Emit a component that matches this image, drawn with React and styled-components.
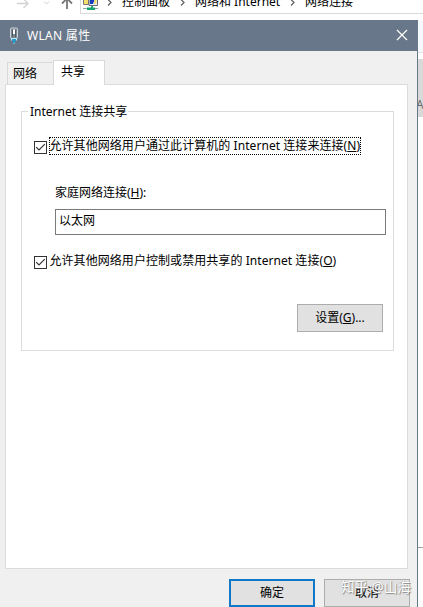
import React from "react";
import styled, { createGlobalStyle } from "styled-components";

const GlobalStyle = createGlobalStyle`
  * { box-sizing: border-box; }
  body {
    margin: 0;
    background: #fff;
    color: #000;
    font: 12px/16px "Noto Sans", "Noto Sans CJK SC", sans-serif;
    overflow: hidden;
  }
`;

const Screen = styled.div`
  display: flex;
  flex-direction: column;
  width: 423px;
  height: 607px;
  overflow: hidden;
  background: #fff;
`;

const ExplorerBar = styled.div`
  display: flex;
  height: 20px;
  flex: none;
  overflow: hidden;
`;

const NavButtons = styled.svg`
  width: 80px;
  height: 20px;
  flex: none;
`;

const AddressBar = styled.div`
  display: flex;
  flex: 1;
  height: 14px;
  border-left: 1px solid #d9d9d9;
  border-bottom: 1px solid #d9d9d9;
  overflow: hidden;
`;

const AddressIcon = styled.svg`
  width: 18px;
  height: 12px;
  margin-left: 2px;
  flex: none;
`;

const Crumb = styled.span`
  width: ${(p) => p.$width}px;
  height: 16px;
  margin-top: -6px;
  white-space: pre;
`;

const Chevron = styled.svg`
  width: 5px;
  height: 7px;
  margin: 0 ${(p) => p.$after}px 0 ${(p) => p.$before}px;
  flex: none;
`;

const Desktop = styled.div`
  display: flex;
  flex: 1;
  min-height: 0;
`;

const Dialog = styled.section`
  display: flex;
  flex-direction: column;
  width: 418px;
  background: #f0f0f0;
  border-right: 1px solid #687789;
`;

const TitleBar = styled.header`
  display: flex;
  align-items: center;
  height: 31px;
  flex: none;
  padding: 0 9px;
  color: #fff;
  background: #687789;
`;

const DeviceIcon = styled.svg`
  width: 10px;
  height: 18px;
`;

const Title = styled.h1`
  margin: 1px 0 0 8px;
  font: inherit;
  letter-spacing: 0.3px;
  flex: 1;
  white-space: pre;
`;

const CloseIcon = styled.svg`
  width: 12px;
  height: 12px;
  margin-bottom: 1px;
`;

const TabList = styled.div`
  display: flex;
  align-items: flex-end;
  height: 33px;
  flex: none;
  padding-left: 7px;
`;

const Tab = styled.div`
  width: ${(p) => (p.$active ? 52 : 46)}px;
  height: ${(p) => (p.$active ? 25 : 22)}px;
  padding: ${(p) => (p.$active ? "3px 0 0 7px" : "3px 0 0 5px")};
  margin-bottom: ${(p) => (p.$active ? -1 : 0)}px;
  border: 1px solid #d9d9d9;
  border-right-width: ${(p) => (p.$active ? 1 : 0)}px;
  border-bottom: 0;
  background: ${(p) => (p.$active ? "#fff" : "#f0f0f0")};
  z-index: ${(p) => (p.$active ? 1 : 0)};
`;

const Panel = styled.div`
  width: 403px;
  height: 485px;
  flex: none;
  margin-left: 5px;
  padding: 18px 13px 0 15px;
  border: 1px solid #dcdcdc;
  background: #fff;
`;

const Group = styled.fieldset`
  display: flex;
  flex-direction: column;
  height: 248px;
  margin: 0;
  min-width: 0;
  padding: 18px 7px 0 12px;
  border: 1px solid #dcdcdc;
`;

const Legend = styled.legend`
  position: relative;
  top: 1px;
  margin-left: -6px;
  padding: 0 1px 0 2px;
`;

const CheckRow = styled.label`
  display: flex;
  align-items: center;
  height: 18px;
  margin-bottom: ${(p) => p.$after || 0}px;
`;

const CheckBox = styled.svg`
  width: 13px;
  height: 13px;
  margin-top: 2px;
  flex: none;
`;

const CheckText = styled.span`
  height: 18px;
  margin-left: 2px;
  border: 1px dotted ${(p) => (p.$focused ? "#000" : "transparent")};
  line-height: 15px;
  letter-spacing: 0.06px;
  text-indent: -0.5px;
  white-space: pre;
`;

const FieldLabel = styled.div`
  height: 16px;
  margin: 0 0 8px 21px;
`;

const ConnectionInput = styled.div`
  width: 331px;
  height: 26px;
  margin: 0 0 17px 21px;
  padding: 3px;
  border: 1px solid #7a7a7a;
`;

const Button = styled.button`
  width: 86px;
  height: 28px;
  flex: none;
  padding: 0 0 ${(p) => (p.$primary ? 0 : 1)}px;
  align-self: ${(p) => (p.$end ? "flex-end" : "auto")};
  margin: ${(p) => (p.$end ? "34px 3px 0 0" : "0")};
  font: inherit;
  color: #000;
  background: #e1e1e1;
  border: ${(p) => (p.$primary ? "2px solid #0f78c8" : "1px solid #adadad")};
`;

const Actions = styled.footer`
  display: flex;
  gap: 9px;
  padding: 10px 0 0 229px;
`;

const MarkedButton = styled.div`
  position: relative;
`;

const Watermark = styled.span`
  position: absolute;
  top: -1px;
  left: 17px;
  font-size: 13.5px;
  line-height: 18px;
  color: #fff;
  text-shadow: 1px 1px 1px #888, 0 0 1px #aaa;
  white-space: nowrap;
`;

const Sliver = styled.aside`
  display: flex;
  flex-direction: column;
  width: 5px;
  overflow: hidden;
`;

const CommandEdge = styled.div`
  height: 32px;
  margin-top: 1px;
  flex: none;
  background: #f5f8fc;
  border-bottom: 1px solid #dce4ec;
`;

const SelectedEdge = styled.div`
  height: 58px;
  margin-top: 6px;
  padding-top: 38px;
  flex: none;
  color: #6d6d6d;
  background: #d9d9d9;
  text-indent: -2px;
`;

const StatusEdge = styled.div`
  height: 1px;
  margin-top: 430px;
  flex: none;
  background: #a0a0a0;
`;

function Arrow({ before, after }) {
  return (
    <Chevron $before={before} $after={after} viewBox="0 0 5 7">
      <path d="M1 -.5 4 2.5 1 5.5" fill="none" stroke="#666" strokeWidth="1.3" />
    </Chevron>
  );
}

function CheckedBox() {
  return (
    <CheckBox viewBox="0 0 13 13">
      <rect x=".5" y=".5" width="12" height="12" fill="#fff" stroke="#333" />
      <path d="M2.2 6.2 5 9 10.8 3.2" fill="none" stroke="#333" strokeWidth="1.2" />
    </CheckBox>
  );
}

export default function App() {
  return (
    <Screen>
      <GlobalStyle />
      <ExplorerBar>
        <NavButtons viewBox="0 0 80 20" fill="none">
          <path d="M17 3.5H28M23.5 -1 28 3.5 23.5 8" stroke="#d2d2d2" strokeWidth="1.3" />
          <path d="M44 1.5 46.5 4 49 1.5" stroke="#d2d2d2" />
          <path d="M67 9V-2M62 3.5 67 -1.5 72 3.5" stroke="#777" strokeWidth="1.8" />
        </NavButtons>
        <AddressBar>
          <AddressIcon viewBox="0 0 18 12">
            <path d="M.5 -1H5.5V4.5H.5Z" fill="#f5df68" stroke="#777" />
            <path d="M6 -1H14.5V5.5H6Z" fill="#eaf1f8" stroke="#666b78" />
            <path d="M7 0H11.5L10 4H7Z" fill="#183cc0" />
            <path d="M11.5 0H13.5V3L11 4Z" fill="#f2dc61" />
            <path d="M8 6H10V8H8Z" fill="#31a67a" />
            <path d="M0 8.5H15" stroke="#8eacb0" />
            <path d="M4 7.5H12V10H4Z" fill="#16a36e" />
          </AddressIcon>
          <Arrow before={6} after={10} />
          <Crumb $width={50}>控制面板</Crumb>
          <Arrow before={8} after={10} />
          <Crumb $width={86}>网络和 Internet</Crumb>
          <Arrow before={9} after={10} />
          <Crumb $width={50}>网络连接</Crumb>
        </AddressBar>
      </ExplorerBar>
      <Desktop>
        <Dialog>
          <TitleBar>
            <DeviceIcon viewBox="0 0 10 18">
              <rect x="1.5" y="1" width="7" height="10.5" rx="1" fill="#7d8790" stroke="#cbd3da" />
              <path d="M3.5 3V10M6.5 3V10" stroke="#4d5964" />
              <path d="M5 2.5V7" stroke="#fff" strokeWidth="2" />
              <path d="M2 11H8V13.5H6V16.5H4V13.5H2Z" fill="#b9e8f4" />
              <path d="M3 12H7V14H6V16H4V14H3Z" fill="#249bcb" />
            </DeviceIcon>
            <Title>WLAN 属性</Title>
            <CloseIcon viewBox="0 0 12 12">
              <path d="M1 1 11 11M11 1 1 11" stroke="#fff" strokeWidth="1.2" />
            </CloseIcon>
          </TitleBar>
          <TabList>
            <Tab>网络</Tab>
            <Tab $active>共享</Tab>
          </TabList>
          <Panel>
            <Group>
              <Legend>Internet 连接共享</Legend>
              <CheckRow $after={30}>
                <CheckedBox />
                <CheckText $focused>允许其他网络用户通过此计算机的 Internet 连接来连接(<u>N</u>)</CheckText>
              </CheckRow>
              <FieldLabel>家庭网络连接(<u>H</u>):</FieldLabel>
              <ConnectionInput>以太网</ConnectionInput>
              <CheckRow>
                <CheckedBox />
                <CheckText>允许其他网络用户控制或禁用共享的 Internet 连接(<u>O</u>)</CheckText>
              </CheckRow>
              <Button $end>设置(<u>G</u>)...</Button>
            </Group>
          </Panel>
          <Actions>
            <Button $primary>确定</Button>
            <MarkedButton>
              <Button>取消</Button>
              <Watermark>知乎 @山海</Watermark>
            </MarkedButton>
          </Actions>
        </Dialog>
        <Sliver>
          <CommandEdge />
          <SelectedEdge>A</SelectedEdge>
          <StatusEdge />
        </Sliver>
      </Desktop>
    </Screen>
  );
}
